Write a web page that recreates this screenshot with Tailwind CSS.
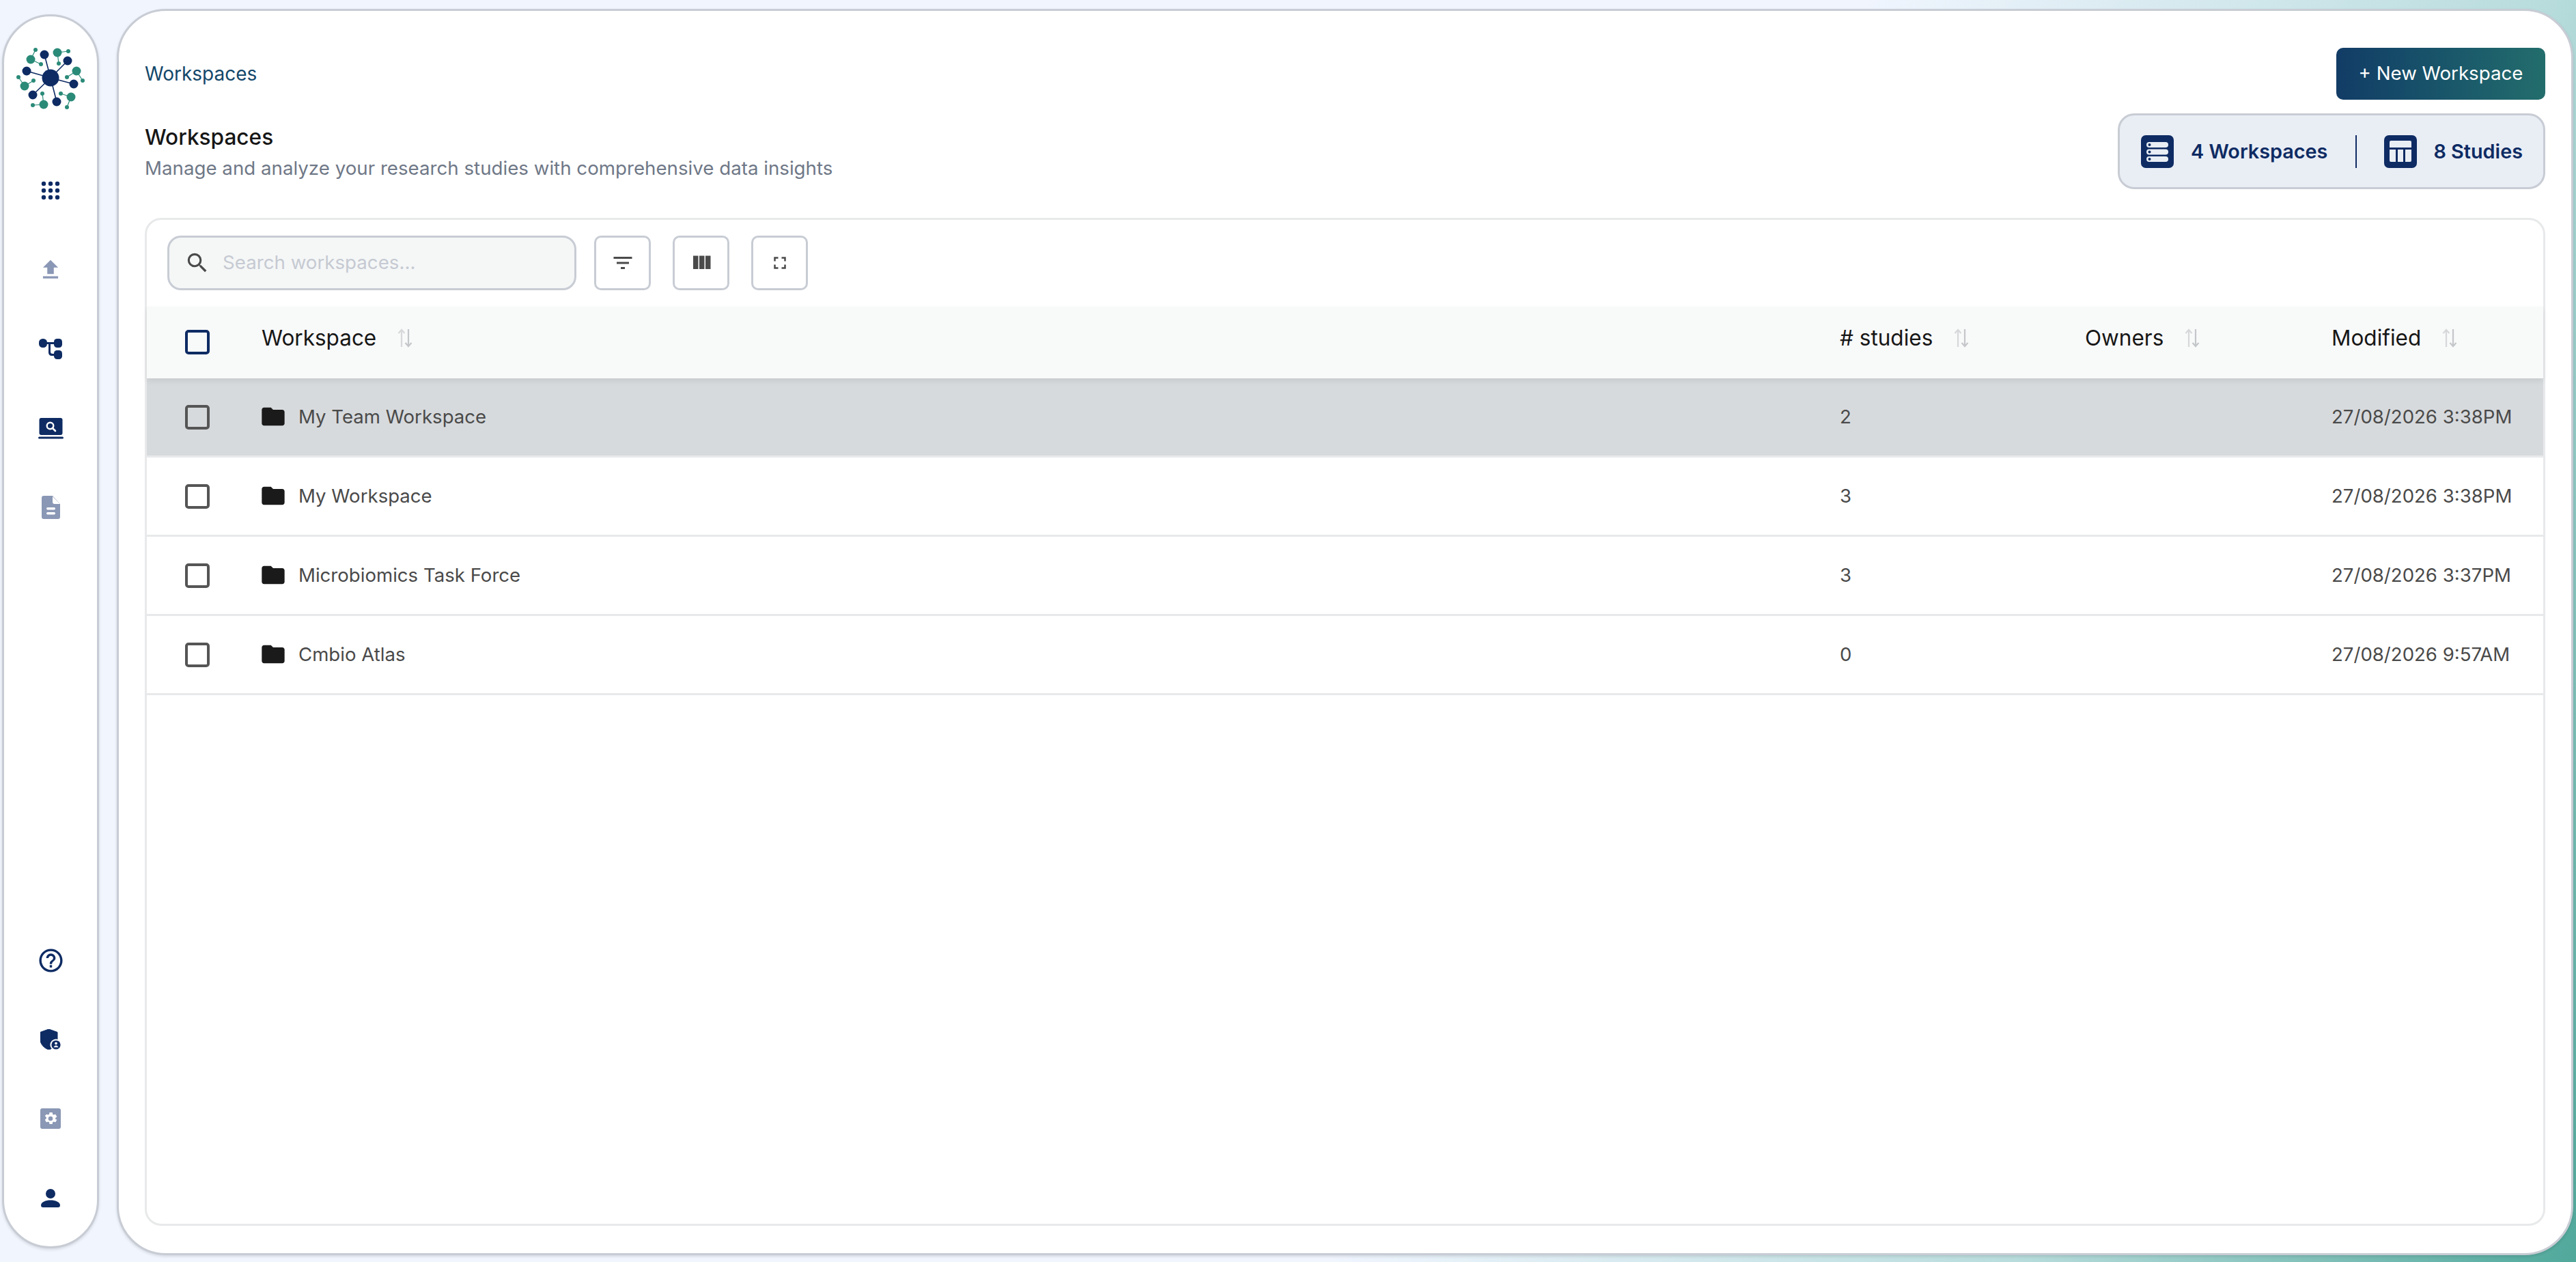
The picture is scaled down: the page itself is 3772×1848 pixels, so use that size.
<!DOCTYPE html>
<html lang="en">
<head>
    <meta charset="UTF-8">
    <meta name="viewport" content="width=device-width, initial-scale=1.0">
    <title>Workspaces</title>
    <script src="https://cdn.jsdelivr.net/npm/@tailwindcss/browser@4"></script>
</head>
<body class="h-screen overflow-hidden font-['Inter',sans-serif] bg-[linear-gradient(113deg,#f0f5fe_60%,#b8dcdc_82%,#50a89b_100%)]">
<div class="flex h-[1848px] w-[3772px] items-start pl-[3px]">

    <!-- Sidebar -->
    <aside class="mt-[21px] flex h-[1807px] w-[142px] shrink-0 flex-col justify-between rounded-full border-[3px] border-[#c8ccd4] bg-white pt-[26px] pb-[13px] shadow-[0_2px_4px_rgba(0,0,0,0.12)]">
        <div class="flex flex-col items-center">
            <svg class="mb-[41px] h-[130px] w-[130px]" viewBox="0 0 130 130">
                <g stroke="#0e2b63" stroke-width="1.6">
                    <path d="M65 64 56 30M65 64 90 39M65 64 30 54M65 64 99 73M65 64 39 89M65 64 74 99"/>
                </g>
                <g stroke="#2a8a78" stroke-width="1.2">
                    <path d="M36 37 43 23M36 37 51 44M75 27 91 25M75 27 77 43M103 54 89 63M103 54 112 68M27 76 18 63M27 76 40 68M95 92 80 87M95 92 89 107M55 103 53 87M55 103 39 104"/>
                </g>
                <g fill="#0e2b63">
                    <circle cx="65" cy="64" r="12.5"/>
                    <circle cx="56" cy="30" r="6.5"/><circle cx="90" cy="39" r="6.5"/><circle cx="30" cy="54" r="6.5"/>
                    <circle cx="99" cy="73" r="6.5"/><circle cx="39" cy="89" r="6.5"/><circle cx="74" cy="99" r="6.5"/>
                </g>
                <g fill="#2a8a78">
                    <circle cx="75" cy="27" r="6.5"/><circle cx="36" cy="37" r="6.5"/><circle cx="103" cy="54" r="6.5"/>
                    <circle cx="27" cy="76" r="6.5"/><circle cx="95" cy="92" r="6.5"/><circle cx="55" cy="103" r="6.5"/>
                    <circle cx="43" cy="23" r="3"/><circle cx="51" cy="44" r="3"/><circle cx="91" cy="25" r="3"/><circle cx="77" cy="43" r="3"/>
                    <circle cx="89" cy="63" r="3"/><circle cx="112" cy="68" r="3"/><circle cx="18" cy="63" r="3"/><circle cx="40" cy="68" r="3"/>
                    <circle cx="80" cy="87" r="3"/><circle cx="89" cy="107" r="3"/><circle cx="53" cy="87" r="3"/><circle cx="39" cy="104" r="3"/>
                </g>
            </svg>

            <div class="flex h-[116px] w-full items-center justify-center">
                <svg class="h-[28px] w-[28px]" viewBox="0 0 28 28" fill="#0e2b63">
                    <circle cx="4" cy="4" r="3.2"/><circle cx="14" cy="4" r="3.2"/><circle cx="24" cy="4" r="3.2"/>
                    <circle cx="4" cy="14" r="3.2"/><circle cx="14" cy="14" r="3.2"/><circle cx="24" cy="14" r="3.2"/>
                    <circle cx="4" cy="24" r="3.2"/><circle cx="14" cy="24" r="3.2"/><circle cx="24" cy="24" r="3.2"/>
                </svg>
            </div>
            <div class="flex h-[116px] w-full items-center justify-center">
                <svg class="h-[38px] w-[38px]" viewBox="0 0 24 24" fill="#8a97b5"><path d="M9 16h6v-6h4l-7-7-7 7h4zm-4 2h14v2H5z"/></svg>
            </div>
            <div class="flex h-[116px] w-full items-center justify-center">
                <svg class="h-[30px] w-[34px]" viewBox="0 0 34 30" fill="#0e2b63">
                    <rect x="0" y="0" width="12" height="13" rx="5.5"/>
                    <rect x="22" y="0" width="12" height="13" rx="4.5"/>
                    <rect x="22" y="17" width="12" height="13" rx="4.5"/>
                    <path d="M10 5h14v3h-7v11c0 2 1 3 3 3h4v3h-5c-3 0-5-2-5-5V8h-4z"/>
                </svg>
            </div>
            <div class="flex h-[116px] w-full items-center justify-center">
                <svg class="h-[31px] w-[37px]" viewBox="0 0 37 31">
                    <rect x="1.5" y="0" width="34" height="25" rx="3" fill="#0e2b63"/>
                    <rect x="0" y="27.5" width="37" height="3" rx="1.5" fill="#0e2b63"/>
                    <circle cx="17.5" cy="11.5" r="4.8" fill="none" stroke="#fff" stroke-width="2.4"/>
                    <path d="M21 15 25 19" stroke="#fff" stroke-width="2.6" stroke-linecap="round"/>
                </svg>
            </div>
            <div class="flex h-[116px] w-full items-center justify-center">
                <svg class="h-[34px] w-[27px]" viewBox="0 0 27 34">
                    <path d="M3 0h13l11 12v19a3 3 0 0 1-3 3H3a3 3 0 0 1-3-3V3a3 3 0 0 1 3-3z" fill="#8a97b5"/>
                    <path d="M16 1v8a3 3 0 0 0 3 3h8z" fill="#fff"/>
                    <rect x="7" y="17" width="13" height="3.4" rx="1.7" fill="#fff"/>
                    <rect x="7" y="24" width="13" height="3.4" rx="1.7" fill="#fff"/>
                </svg>
            </div>
        </div>

        <div class="flex flex-col items-center">
            <div class="flex h-[116px] w-full items-center justify-center">
                <svg class="h-[41px] w-[41px]" viewBox="0 0 24 24" fill="#0e2b63"><path d="M11 18h2v-2h-2v2zm1-16C6.48 2 2 6.48 2 12s4.48 10 10 10 10-4.48 10-10S17.52 2 12 2zm0 18c-4.41 0-8-3.59-8-8s3.59-8 8-8 8 3.59 8 8-3.59 8-8 8zm0-14c-2.21 0-4 1.79-4 4h2c0-1.1.9-2 2-2s2 .9 2 2c0 2-3 1.75-3 5h2c0-2.25 3-2.5 3-5 0-2.21-1.79-4-4-4z"/></svg>
            </div>
            <div class="flex h-[116px] w-full items-center justify-center">
                <svg class="h-[30px] w-[30px]" viewBox="0 0 30 30">
                    <path d="M12.500 0 25 4.500V15C25 22 19.500 28 12.500 30 5.500 28 0 22 0 15V4.500z" fill="#0e2b63" stroke="#0e2b63" stroke-linejoin="round"/>
                    <circle cx="23" cy="23" r="8.600" fill="#fff"/>
                    <circle cx="23" cy="23" r="6.600" fill="#0e2b63"/>
                    <circle cx="23" cy="20.800" r="1.900" fill="#fff"/>
                    <path d="M19.500 26.500c.6-1.800 2-2.600 3.500-2.600s2.900.8 3.500 2.600z" fill="#fff"/>
                </svg>
            </div>
            <div class="flex h-[116px] w-full items-center justify-center">
                <svg class="h-[30px] w-[30px]" viewBox="0 0 30 30">
                    <rect width="30" height="30" rx="3" fill="#8a97b5"/>
                    <path transform="translate(3 3)" fill="#fff" d="M19.200 12.900c.04-.3.06-.6.06-.9s-.02-.6-.07-.9l1.900-1.500c.2-.1.2-.4.1-.6l-1.800-3.100c-.1-.2-.4-.3-.6-.2l-2.200.9c-.5-.4-1-.7-1.500-.9l-.3-2.400c0-.2-.2-.4-.4-.4h-3.600c-.2 0-.4.2-.4.4l-.3 2.400c-.6.2-1.100.5-1.600.9l-2.200-.9c-.2-.1-.5 0-.6.2L3.900 8c-.1.2-.1.5.1.6l1.900 1.500c0 .3-.1.6-.1.900s0 .6.1.9l-1.900 1.500c-.2.1-.2.4-.1.6l1.800 3.100c.1.2.4.3.6.2l2.200-.9c.5.4 1 .7 1.600.9l.3 2.400c0 .2.2.4.4.4h3.600c.2 0 .4-.2.4-.4l.3-2.400c.6-.2 1.100-.5 1.500-.9l2.200.9c.2.1.5 0 .6-.2l1.800-3.100c.1-.2.1-.5-.1-.6zM12 15.300a3.300 3.300 0 1 1 0-6.600 3.300 3.300 0 0 1 0 6.600z"/>
                </svg>
            </div>
            <div class="flex h-[116px] w-full items-center justify-center">
                <svg class="h-[27px] w-[28px]" viewBox="0 0 28 27" fill="#0e2b63">
                    <circle cx="14" cy="7" r="7"/>
                    <path d="M0 24c0-5 7-7.500 14-7.500S28 19 28 24c0 2-1 3-3 3H3c-2 0-3-1-3-3z"/>
                </svg>
            </div>
        </div>
    </aside>

    <!-- Main -->
    <main class="ml-[26px] mt-[13px] flex h-[1825px] w-[3597px] shrink-0 flex-col rounded-[72px] border-[3px] border-[#c8ccd4] bg-white px-[38px] pb-[40px] pt-[54px] shadow-[0_2px_4px_rgba(0,0,0,0.12)]">
        <div class="flex h-[76px] items-center justify-between">
            <span class="text-[28px] text-[#13476a]">Workspaces</span>
            <button class="flex h-[76px] w-[306px] items-center justify-center rounded-[10px] bg-linear-to-r from-[#123c66] to-[#236d6c] text-[27.7px] text-white">+ New Workspace</button>
        </div>

        <div class="mt-[20px] flex h-[111px] items-start justify-between">
            <div>
                <h1 class="mt-[15px] text-[31.6px] leading-[40px] font-medium text-[#161616]">Workspaces</h1>
                <p class="mt-[5px] text-[27.7px] leading-[40px] text-[#6f7887]">Manage and analyze your research studies with comprehensive data insights</p>
            </div>
            <div class="flex h-[111px] w-[626px] items-center rounded-[24px] border-[3px] border-[#c8ccd4] bg-[#e9eef5] pl-[31px]">
                <svg class="h-[48px] w-[48px]" viewBox="0 0 48 48">
                    <rect width="48" height="48" rx="7" fill="#0e2b63"/>
                    <g fill="#e9eef5"><rect x="8" y="10" width="32" height="8" rx="4"/><rect x="8" y="20.500" width="32" height="8" rx="4"/><rect x="8" y="31" width="32" height="8" rx="4"/></g>
                    <g fill="#0e2b63"><circle cx="12.500" cy="14" r="2"/><circle cx="12.500" cy="24.500" r="2"/><circle cx="12.500" cy="35" r="2"/></g>
                </svg>
                <span class="ml-[25px] text-[28.8px] font-semibold text-[#0e2b63]">4 Workspaces</span>
                <span class="ml-[41px] h-[48px] w-[2px] bg-[#0e2b63]"></span>
                <svg class="ml-[40px] h-[48px] w-[48px]" viewBox="0 0 48 48">
                    <rect width="48" height="48" rx="7" fill="#0e2b63"/>
                    <path d="M10 8h28a2 2 0 0 1 2 2v8H8v-8a2 2 0 0 1 2-2zM8 21h9v18h-7a2 2 0 0 1-2-2zM20 21h8v18h-8zM31 21h9v16a2 2 0 0 1-2 2h-7z" fill="#e9eef5"/>
                </svg>
                <span class="ml-[24px] text-[28.8px] font-semibold text-[#0e2b63]">8 Studies</span>
            </div>
        </div>

        <!-- Table card -->
        <section class="mt-[42px] flex flex-1 flex-col rounded-[24px] border-[3px] border-[#e8e9ea] bg-white">
            <div class="flex h-[127px] gap-[26px] pl-[30px] pt-[23px]">
                <div class="flex h-[80px] w-[599px] items-center rounded-[20px] border-[3px] border-[#c8ccd4] bg-[#f5f7f7] pl-[22px]">
                    <svg class="h-[38px] w-[38px]" viewBox="0 0 24 24" fill="#4a4a4a"><path d="M15.500 14h-.79l-.28-.27A6.470 6.470 0 0 0 16 9.500 6.500 6.500 0 1 0 9.500 16c1.610 0 3.090-.59 4.230-1.570l.27.28v.79l5 4.990L20.490 19l-4.990-5zm-6 0C7.010 14 5 11.990 5 9.500S7.010 5 9.500 5 14 7.010 14 9.500 11.990 14 9.500 14z"/></svg>
                    <span class="ml-[18px] text-[27.7px] text-[#c6cad2]">Search workspaces...</span>
                </div>
                <div class="flex h-[80px] w-[83px] items-center justify-center rounded-[10px] border-[3px] border-[#c8ccd4]">
                    <svg class="h-[36px] w-[36px]" viewBox="0 0 24 24" fill="#4a4a4a"><path d="M10 18h4v-2h-4v2zM3 6v2h18V6H3zm3 7h12v-2H6v2z"/></svg>
                </div>
                <div class="ml-[6px] flex h-[80px] w-[83px] items-center justify-center rounded-[10px] border-[3px] border-[#c8ccd4]">
                    <svg class="h-[36px] w-[36px]" viewBox="0 0 24 24" fill="#4a4a4a"><path d="M10 18h5V5h-5v13zm-6 0h5V5H4v13zM16 5v13h5V5h-5z"/></svg>
                </div>
                <div class="ml-[6px] flex h-[80px] w-[83px] items-center justify-center rounded-[10px] border-[3px] border-[#c8ccd4]">
                    <svg class="h-[30px] w-[30px]" viewBox="0 0 24 24" fill="#4a4a4a"><path d="M7 14H5v5h5v-2H7v-3zm-2-4h2V7h3V5H5v5zm12 7h-3v2h5v-5h-2v3zM14 5v2h3v3h2V5h-5z"/></svg>
                </div>
            </div>

            <!-- Header row -->
            <div class="relative z-10 grid h-[105px] grid-cols-[168px_2311px_359px_361px_1fr] items-center bg-[#f8f9f9] text-[31.5px] text-[#161616] shadow-[0_4px_8px_rgba(0,0,0,0.07)]">
                <div class="pl-[56px] pb-[2px]"><span class="block h-[36px] w-[36px] rounded-[5px] border-[4px] border-[#0e2b63]"></span></div>
                <div class="flex items-center gap-[30px] pb-[13px]">Workspace
                    <svg class="h-[28px] w-[24px]" viewBox="0 0 24 28" fill="none" stroke-width="2.200"><path d="M7 27V2M2.500 7 7 2l4.500 5" stroke="#d6d8da"/><path d="M17 1v25M12.500 21l4.500 5 4.500-5" stroke="#c4c7ca"/></svg>
                </div>
                <div class="flex items-center gap-[30px] pb-[13px]"># studies
                    <svg class="h-[28px] w-[24px]" viewBox="0 0 24 28" fill="none" stroke-width="2.200"><path d="M7 27V2M2.500 7 7 2l4.500 5" stroke="#d6d8da"/><path d="M17 1v25M12.500 21l4.500 5 4.500-5" stroke="#c4c7ca"/></svg>
                </div>
                <div class="flex items-center gap-[30px] pb-[13px]">Owners
                    <svg class="h-[28px] w-[24px]" viewBox="0 0 24 28" fill="none" stroke-width="2.200"><path d="M7 27V2M2.500 7 7 2l4.500 5" stroke="#d6d8da"/><path d="M17 1v25M12.500 21l4.500 5 4.500-5" stroke="#c4c7ca"/></svg>
                </div>
                <div class="flex items-center gap-[30px] pb-[13px]">Modified
                    <svg class="h-[28px] w-[24px]" viewBox="0 0 24 28" fill="none" stroke-width="2.200"><path d="M7 27V2M2.500 7 7 2l4.500 5" stroke="#d6d8da"/><path d="M17 1v25M12.500 21l4.500 5 4.500-5" stroke="#c4c7ca"/></svg>
                </div>
            </div>

            <!-- Rows -->
            <div class="grid h-[116px] grid-cols-[168px_2311px_359px_361px_1fr] items-center border-b-[3px] border-[#e8e9ea] bg-[#d7dadd] text-[27.6px] text-[#4a4a4a]">
                <div class="pl-[56px]"><span class="block h-[36px] w-[36px] rounded-[5px] border-[4px] border-[#555555]"></span></div>
                <div class="flex items-center gap-[17px]">
                    <svg class="-ml-[3px] h-[40px] w-[40px]" viewBox="0 0 24 24" fill="#1a1a1a"><path d="M10 4H4c-1.100 0-2 .9-2 2v12c0 1.100.9 2 2 2h16c1.100 0 2-.9 2-2V8c0-1.100-.9-2-2-2h-8l-2-2z"/></svg>
                    My Team Workspace
                </div>
                <div>2</div><div></div><div>27/08/2026 3:38PM</div>
            </div>
            <div class="grid h-[116px] grid-cols-[168px_2311px_359px_361px_1fr] items-center border-b-[3px] border-[#e8e9ea] text-[27.6px] text-[#4a4a4a]">
                <div class="pl-[56px]"><span class="block h-[36px] w-[36px] rounded-[5px] border-[4px] border-[#555555]"></span></div>
                <div class="flex items-center gap-[17px]">
                    <svg class="-ml-[3px] h-[40px] w-[40px]" viewBox="0 0 24 24" fill="#1a1a1a"><path d="M10 4H4c-1.100 0-2 .9-2 2v12c0 1.100.9 2 2 2h16c1.100 0 2-.9 2-2V8c0-1.100-.9-2-2-2h-8l-2-2z"/></svg>
                    My Workspace
                </div>
                <div>3</div><div></div><div>27/08/2026 3:38PM</div>
            </div>
            <div class="grid h-[116px] grid-cols-[168px_2311px_359px_361px_1fr] items-center border-b-[3px] border-[#e8e9ea] text-[27.6px] text-[#4a4a4a]">
                <div class="pl-[56px]"><span class="block h-[36px] w-[36px] rounded-[5px] border-[4px] border-[#555555]"></span></div>
                <div class="flex items-center gap-[17px]">
                    <svg class="-ml-[3px] h-[40px] w-[40px]" viewBox="0 0 24 24" fill="#1a1a1a"><path d="M10 4H4c-1.100 0-2 .9-2 2v12c0 1.100.9 2 2 2h16c1.100 0 2-.9 2-2V8c0-1.100-.9-2-2-2h-8l-2-2z"/></svg>
                    Microbiomics Task Force
                </div>
                <div>3</div><div></div><div>27/08/2026 3:37PM</div>
            </div>
            <div class="grid h-[116px] grid-cols-[168px_2311px_359px_361px_1fr] items-center border-b-[3px] border-[#e8e9ea] text-[27.6px] text-[#4a4a4a]">
                <div class="pl-[56px]"><span class="block h-[36px] w-[36px] rounded-[5px] border-[4px] border-[#555555]"></span></div>
                <div class="flex items-center gap-[17px]">
                    <svg class="-ml-[3px] h-[40px] w-[40px]" viewBox="0 0 24 24" fill="#1a1a1a"><path d="M10 4H4c-1.100 0-2 .9-2 2v12c0 1.100.9 2 2 2h16c1.100 0 2-.9 2-2V8c0-1.100-.9-2-2-2h-8l-2-2z"/></svg>
                    Cmbio Atlas
                </div>
                <div>0</div><div></div><div>27/08/2026 9:57AM</div>
            </div>
        </section>
    </main>
</div>
</body>
</html>
